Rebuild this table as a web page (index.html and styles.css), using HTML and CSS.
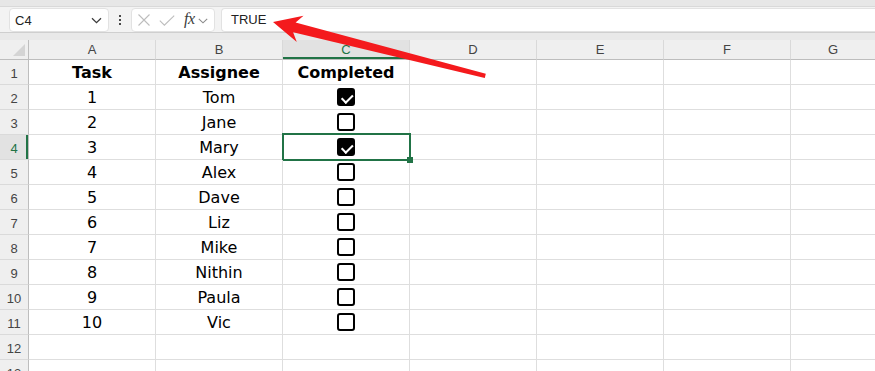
FILE: index.html
```html
<!DOCTYPE html>
<html>
<head>
<meta charset="utf-8">
<link rel="stylesheet" href="styles.css">
</head>
<body>
<div class="app">
  <div class="topstrip"></div>
  <div class="toolbar">
    <div class="namebox">
      <span>C4</span>
      <svg class="chev" width="11" height="7" viewBox="0 0 11 7"><path d="M1 1.2 L5.5 5.6 L10 1.2" fill="none" stroke="#3c3c3c" stroke-width="1.3"/></svg>
    </div>
    <div class="dots"><i></i><i></i><i></i></div>
    <div class="fxgroup">
      <svg class="ico" width="14" height="12" viewBox="0 0 14 12"><path d="M1.5 0.5 L12.5 11.5 M12.5 0.5 L1.5 11.5" stroke="#bdbdbd" stroke-width="1.1" fill="none"/></svg>
      <svg class="ico" width="16" height="11" viewBox="0 0 16 11"><path d="M0.8 5.6 L5.4 10.2 L15.2 0.6" stroke="#bdbdbd" stroke-width="1.1" fill="none"/></svg>
      <span class="fx">fx</span>
      <svg class="chev-s" width="10" height="6" viewBox="0 0 10 6"><path d="M0.8 0.8 L5 4.8 L9.2 0.8" fill="none" stroke="#8a8a8a" stroke-width="1.1"/></svg>
    </div>
    <div class="formula">TRUE</div>
  </div>
  <div class="band"></div>

  <div class="sheet">
    <div class="corner"><span class="tri"></span></div>
    <div class="colhead">A</div>
    <div class="colhead">B</div>
    <div class="colhead sel">C</div>
    <div class="colhead">D</div>
    <div class="colhead">E</div>
    <div class="colhead">F</div>
    <div class="colhead last">G</div>

    <div class="rowhead">1</div>
    <div class="cell bold">Task</div>
    <div class="cell bold">Assignee</div>
    <div class="cell bold">Completed</div>
    <div class="cell"></div><div class="cell"></div><div class="cell"></div><div class="cell last"></div>

    <div class="rowhead">2</div>
    <div class="cell">1</div>
    <div class="cell">Tom</div>
    <div class="cell"><span class="box on"></span></div>
    <div class="cell"></div><div class="cell"></div><div class="cell"></div><div class="cell last"></div>

    <div class="rowhead">3</div>
    <div class="cell">2</div>
    <div class="cell">Jane</div>
    <div class="cell"><span class="box"></span></div>
    <div class="cell"></div><div class="cell"></div><div class="cell"></div><div class="cell last"></div>

    <div class="rowhead sel">4</div>
    <div class="cell">3</div>
    <div class="cell">Mary</div>
    <div class="cell active"><span class="box on"></span></div>
    <div class="cell"></div><div class="cell"></div><div class="cell"></div><div class="cell last"></div>

    <div class="rowhead">5</div>
    <div class="cell">4</div>
    <div class="cell">Alex</div>
    <div class="cell"><span class="box"></span></div>
    <div class="cell"></div><div class="cell"></div><div class="cell"></div><div class="cell last"></div>

    <div class="rowhead">6</div>
    <div class="cell">5</div>
    <div class="cell">Dave</div>
    <div class="cell"><span class="box"></span></div>
    <div class="cell"></div><div class="cell"></div><div class="cell"></div><div class="cell last"></div>

    <div class="rowhead">7</div>
    <div class="cell">6</div>
    <div class="cell">Liz</div>
    <div class="cell"><span class="box"></span></div>
    <div class="cell"></div><div class="cell"></div><div class="cell"></div><div class="cell last"></div>

    <div class="rowhead">8</div>
    <div class="cell">7</div>
    <div class="cell">Mike</div>
    <div class="cell"><span class="box"></span></div>
    <div class="cell"></div><div class="cell"></div><div class="cell"></div><div class="cell last"></div>

    <div class="rowhead">9</div>
    <div class="cell">8</div>
    <div class="cell">Nithin</div>
    <div class="cell"><span class="box"></span></div>
    <div class="cell"></div><div class="cell"></div><div class="cell"></div><div class="cell last"></div>

    <div class="rowhead">10</div>
    <div class="cell">9</div>
    <div class="cell">Paula</div>
    <div class="cell"><span class="box"></span></div>
    <div class="cell"></div><div class="cell"></div><div class="cell"></div><div class="cell last"></div>

    <div class="rowhead">11</div>
    <div class="cell">10</div>
    <div class="cell">Vic</div>
    <div class="cell"><span class="box"></span></div>
    <div class="cell"></div><div class="cell"></div><div class="cell"></div><div class="cell last"></div>

    <div class="rowhead">12</div>
    <div class="cell"></div><div class="cell"></div><div class="cell"></div>
    <div class="cell"></div><div class="cell"></div><div class="cell"></div><div class="cell last"></div>

    <div class="rowhead">13</div>
    <div class="cell"></div><div class="cell"></div><div class="cell"></div>
    <div class="cell"></div><div class="cell"></div><div class="cell"></div><div class="cell last"></div>
  </div>

  <!-- callout arrow pointing at the formula bar value -->
  <svg class="arrow" width="875" height="371" viewBox="0 0 875 371">
    <polygon points="273,22 303.5,15.8 295.6,22.6 485.8,73.7 484.8,78 293.1,32.3 296.8,42" fill="#f41a1d"/>
  </svg>
</div>
</body>
</html>
```

FILE: styles.css
```css
* { box-sizing: border-box; }

html, body {
  margin: 0;
  padding: 0;
  background: #f3f3f3;
}

.app {
  position: relative;
  width: 875px;
  height: 371px;
  overflow: hidden;
  font-family: "Liberation Sans", Arial, sans-serif;
}

.topstrip {
  height: 7px;
  background: #e7e7e7;
  border-bottom: 1px solid #d9d9d9;
}

.toolbar {
  height: 25px;
  display: flex;
  align-items: flex-start;
  padding-top: 1px;
  background: #f3f3f3;
}

.namebox {
  margin-left: 9px;
  width: 100px;
  height: 24px;
  background: #fff;
  border: 1px solid #e2e2e2;
  border-radius: 4px;
  display: flex;
  align-items: center;
  justify-content: space-between;
  padding: 0 6px 0 5px;
  font-size: 13px;
  color: #222;
}

.namebox .chev { margin-top: 1px; }

.dots {
  width: 22px;
  height: 24px;
  display: flex;
  flex-direction: column;
  align-items: center;
  justify-content: center;
  gap: 1.6px;
}

.dots i {
  display: block;
  width: 2px;
  height: 2px;
  background: #4a4a4a;
}

.fxgroup {
  width: 84px;
  height: 24px;
  background: #fff;
  border: 1px solid #e2e2e2;
  border-radius: 4px;
  display: flex;
  align-items: center;
  padding-left: 5px;
}

.fxgroup .ico:first-child { margin-right: 8px; }
.fxgroup .ico + .ico { margin-right: 9px; }

.fx {
  font-family: "Liberation Serif", "Times New Roman", serif;
  font-style: italic;
  font-size: 16px;
  color: #3c3c3c;
  letter-spacing: -0.5px;
  margin-right: 3px;
  margin-top: -2px;
}

.chev-s { margin-top: 1px; }

.formula {
  margin-left: 6px;
  flex: 1;
  height: 24px;
  background: #fff;
  border: 1px solid #e2e2e2;
  border-right: none;
  border-radius: 4px 0 0 4px;
  font-size: 13px;
  color: #222;
  line-height: 22px;
  padding-left: 9px;
}

.band {
  height: 8px;
  background: #e9e9e9;
  border-top: 1px solid #cfcfcf;
}

/* worksheet grid */
.sheet {
  display: grid;
  grid-template-columns: 29px repeat(6, 127px) 1fr;
  grid-template-rows: 20px repeat(13, 25px);
  background: #fff;
}

.corner {
  position: relative;
  background: #efefef;
  border-right: 1px solid #bdbdbd;
  border-bottom: 1px solid #bdbdbd;
}

.corner .tri {
  position: absolute;
  right: 3px;
  bottom: 3px;
  width: 0;
  height: 0;
  border-left: 12px solid transparent;
  border-bottom: 12px solid #d4d4d4;
}

.colhead {
  background: #efefef;
  border-right: 1px solid #d9d9d9;
  border-bottom: 1px solid #bdbdbd;
  text-align: center;
  font-size: 13px;
  line-height: 18px;
  padding-top: 1px;
  color: #444;
}

.colhead.sel {
  background: #e2e2e2;
  color: #217346;
  box-shadow: inset 0 -2px 0 #217346;
}

.colhead.last, .cell.last { border-right: none; }

.rowhead {
  background: #efefef;
  border-right: 1px solid #bdbdbd;
  border-bottom: 1px solid #dadada;
  text-align: center;
  font-size: 13px;
  line-height: 21px;
  padding-top: 3px;
  color: #444;
}

.rowhead.sel {
  background: #e2e2e2;
  color: #217346;
  box-shadow: inset -2px 0 0 #217346;
}

.cell {
  position: relative;
  border-right: 1px solid #dedede;
  border-bottom: 1px solid #dedede;
  display: flex;
  justify-content: center;
  align-items: center;
  font-family: "DejaVu Sans", Verdana, sans-serif;
  font-size: 16px;
  color: #000;
  line-height: 22px;
  padding-top: 2px;
}

.cell.bold { font-weight: bold; }

/* active cell outline with fill handle */
.cell.active::after {
  content: "";
  position: absolute;
  top: -2px;
  left: -1px;
  right: -2px;
  bottom: -2px;
  border: 2px solid #217346;
  pointer-events: none;
}

.cell.active::before {
  content: "";
  position: absolute;
  right: -4px;
  bottom: -4px;
  width: 6px;
  height: 6px;
  background: #217346;
  z-index: 2;
}

/* checkbox control */
.box {
  width: 18px;
  height: 18px;
  border: 2px solid #000;
  border-radius: 3px;
  margin-top: -2px;
  position: relative;
  background: #fff;
}

.box.on {
  background: #000;
}

.box.on::after {
  content: "";
  position: absolute;
  left: 4.5px;
  top: 1.5px;
  width: 4.5px;
  height: 8.5px;
  border-right: 2.2px solid #fff;
  border-bottom: 2.2px solid #fff;
  transform: rotate(45deg);
}

.arrow {
  position: absolute;
  left: 0;
  top: 0;
  pointer-events: none;
}
```
